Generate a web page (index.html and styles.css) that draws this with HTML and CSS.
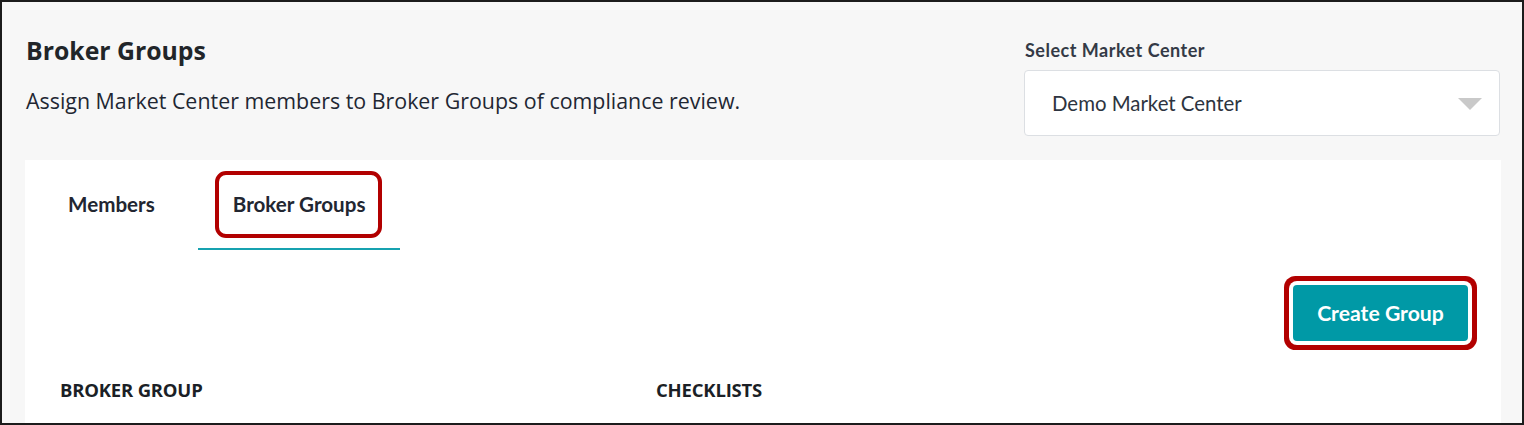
FILE: index.html
```html
<!DOCTYPE html>
<html lang="en">
<head>
  <meta charset="UTF-8" />
  <meta name="viewport" content="width=device-width, initial-scale=1.0" />
  <title>Broker Groups</title>
  <link rel="stylesheet" href="styles.css">
</head>
<body>

<div class="frame">
  <div class="page-header">
    <div class="intro">
      <h1>Broker Groups</h1>
      <p>Assign Market Center members to Broker Groups of compliance review.</p>
    </div>
    <div class="market-select">
      <label>Select Market Center</label>
      <div class="select-box">
        <span>Demo Market Center</span>
        <span class="caret"></span>
      </div>
    </div>
  </div>

  <div class="card">
    <div class="tabs">
      <div class="tab">Members</div>
      <div class="tab active">Broker Groups</div>
    </div>

    <div class="toolbar">
      <button class="btn-create">Create Group</button>
    </div>

    <div class="table-head">
      <div class="col-group">BROKER GROUP</div>
      <div class="col-checklists">CHECKLISTS</div>
    </div>
  </div>
</div>

</body>
</html>
```

FILE: styles.css
```css
body {
  margin: 0;
  padding: 0;
  background: #fff;
  font-family: 'Open Sans', 'Liberation Sans', sans-serif;
}

.frame {
  box-sizing: border-box;
  width: 1524px;
  height: 425px;
  border: 2px solid #1c1c1c;
  background: #f7f7f7;
  overflow: hidden;
}

.page-header {
  display: flex;
  justify-content: space-between;
  height: 158px;
  padding: 0 22px 0 24px;
}

.intro h1 {
  margin: 32px 0 0;
  font-size: 24.8px;
  line-height: 32px;
  font-weight: 700;
  color: #212529;
}

.intro p {
  margin: 21px 0 0;
  font-size: 21.4px;
  line-height: 28px;
  color: #1f2733;
}

.market-select {
  display: flex;
  flex-direction: column;
  width: 476px;
  padding-top: 36px;
  font-family: Lato, 'Liberation Sans', sans-serif;
}

.market-select label {
  font-size: 18px;
  line-height: 24px;
  font-weight: 700;
  letter-spacing: 0.5px;
  color: #343a46;
  padding-left: 1px;
}

.select-box {
  box-sizing: border-box;
  height: 66px;
  margin-top: 8px;
  display: flex;
  align-items: center;
  justify-content: space-between;
  padding: 0 17px 0 27px;
  background: #fff;
  border: 1px solid #dcdfe3;
  border-radius: 4px;
  font-size: 20.4px;
  color: #2d3440;
}

.caret {
  width: 0;
  height: 0;
  border-left: 12px solid transparent;
  border-right: 12px solid transparent;
  border-top: 12px solid #c9c9c9;
  margin-top: 2px;
}

.card {
  margin: 0 21px 0 23px;
  height: 280px;
  background: #fff;
}

.tabs {
  display: flex;
  gap: 8px;
  padding-left: 8px;
  font-family: Lato, 'Liberation Sans', sans-serif;
}

.tab {
  position: relative;
  margin-top: 32px;
  padding: 0 35px 32px;
  line-height: 24px;
  font-size: 20.6px;
  font-weight: 700;
  color: #222631;
  border-bottom: 2px solid transparent;
}

.tab.active {
  border-bottom-color: #17a2b0;
}

/* annotation ring */
.tab.active::after {
  content: '';
  position: absolute;
  left: 17px;
  top: -21px;
  width: 159px;
  height: 59px;
  border: 4px solid #b20000;
  border-radius: 11px;
}

.toolbar {
  display: flex;
  justify-content: flex-end;
  padding-right: 33px;
  margin-top: 35px;
}

.btn-create {
  width: 175px;
  height: 56px;
  border: none;
  border-radius: 4px;
  background: #0099a6;
  color: #fff;
  font-family: Lato, 'Liberation Sans', sans-serif;
  font-size: 21.2px;
  font-weight: 700;
  box-shadow: 0 0 0 4px #fff, 0 0 0 9px #b20000;
}

.table-head {
  display: flex;
  margin-top: 37px;
  padding-left: 35px;
  font-size: 18.5px;
  font-weight: 700;
  line-height: 24px;
  color: #1b1f26;
  letter-spacing: -0.2px;
}

.col-group {
  width: 596px;
}
```
